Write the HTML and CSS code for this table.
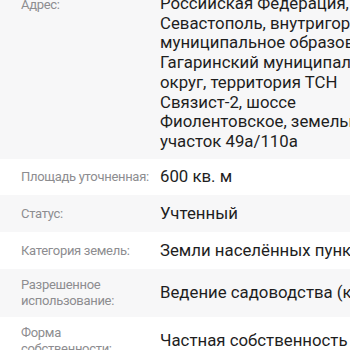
FILE: index.html
```html
<!DOCTYPE html>
<html lang="ru">
<head>
<meta charset="utf-8">
<link rel="stylesheet" href="styles.css">
</head>
<body>
<div class="table">
  <div class="row row-address alt">
    <div class="label">Адрес:</div>
    <div class="value">Российская Федерация, Севастополь, внутригородское муниципальное образование Гагаринский муниципальный округ, территория ТСН Связист-2, шоссе Фиолентовское, земельный участок 49а/110а</div>
  </div>
  <div class="row">
    <div class="label">Площадь уточненная:</div>
    <div class="value">600 кв. м</div>
  </div>
  <div class="row alt">
    <div class="label">Статус:</div>
    <div class="value">Учтенный</div>
  </div>
  <div class="row">
    <div class="label">Категория земель:</div>
    <div class="value nowrap">Земли населённых пунктов</div>
  </div>
  <div class="row alt">
    <div class="label">Разрешенное использование:</div>
    <div class="value nowrap">Ведение садоводства (код 13.2)</div>
  </div>
  <div class="row">
    <div class="label">Форма собственности:</div>
    <div class="value nowrap">Частная собственность</div>
  </div>
</div>
</body>
</html>
```
FILE: styles.css
```css
html, body {
  margin: 0;
  padding: 0;
  overflow: hidden;
  background: #ffffff;
}
body {
  font-family: Roboto, "Noto Sans", sans-serif;
  width: 350px;
  height: 350px;
}
.table {
  margin-top: -10px;
  width: 460px;
}
.row {
  display: flex;
  align-items: center;
  padding: 8.5px 0 8.5px 21px;
  gap: 9px;
}
.row.alt {
  background: #f7f7f8;
}
.row-address {
  align-items: flex-start;
  padding: 4px 0 7px 21px;
}
.row-address .label {
  padding-top: 3px;
}
.label {
  flex: none;
  width: 130px;
  font-size: 13px;
  letter-spacing: -0.3px;
  line-height: 15.5px;
  color: #8d8d90;
}
.value {
  flex: none;
  width: 257px;
  font-size: 16.8px;
  line-height: 19.7px;
  color: #1e1e1e;
}
.nowrap {
  white-space: nowrap;
}
```
